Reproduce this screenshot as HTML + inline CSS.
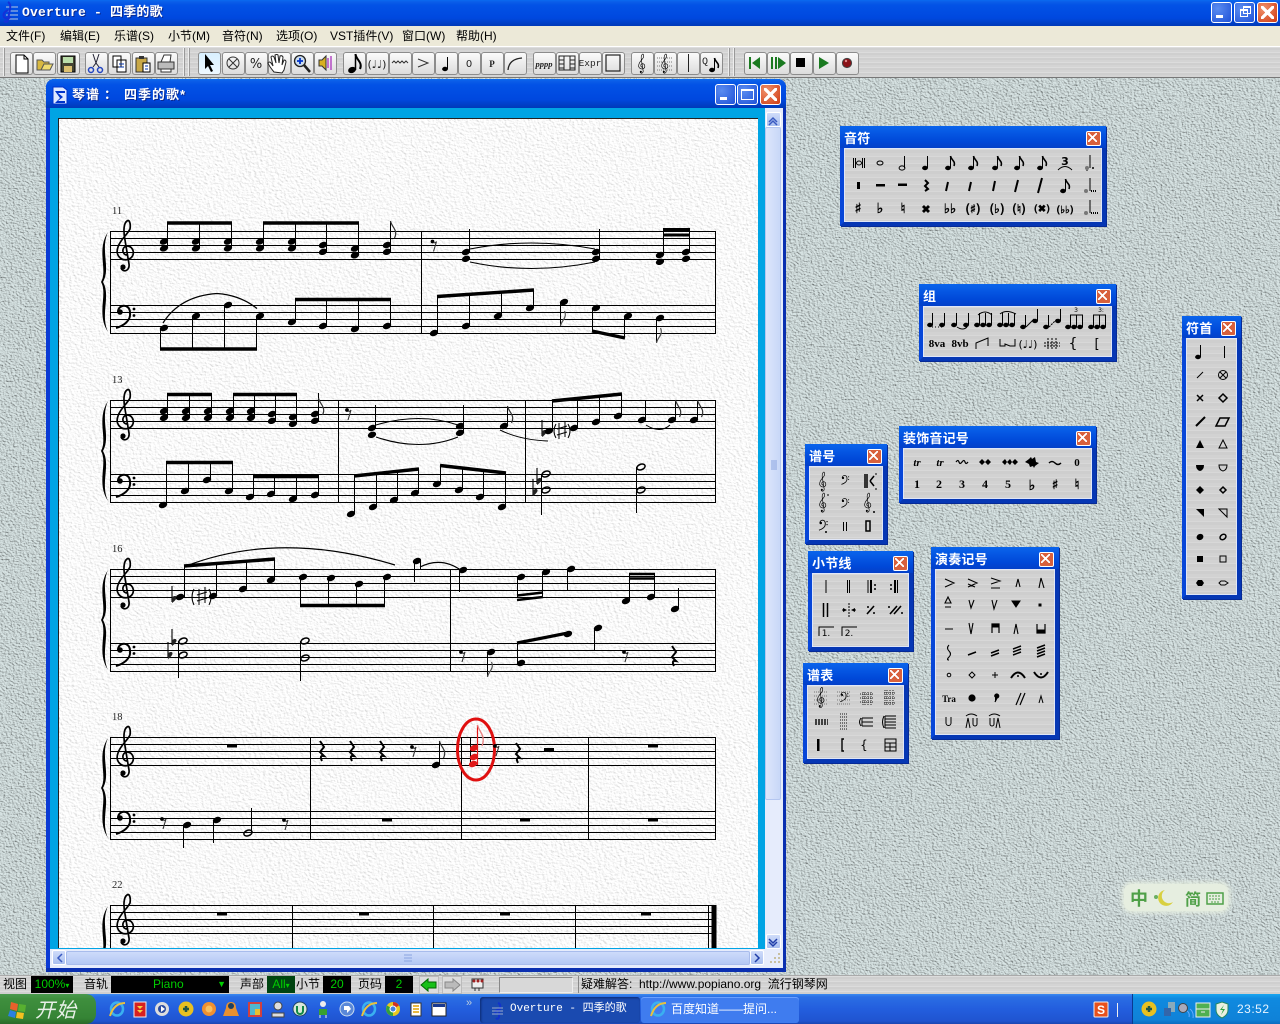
<!DOCTYPE html>
<html lang="zh"><head><meta charset="utf-8"><title>Overture - 四季的歌</title>
<style>
html,body{margin:0;padding:0;width:1280px;height:1024px;overflow:hidden;background:#b9c5c5;font-family:"Liberation Sans","WenQuanYi Zen Hei","Noto Sans CJK SC",sans-serif;font-size:12px;color:#000}
div{position:absolute;box-sizing:border-box}
svg{position:absolute;left:0;top:0}
.tbar{background:linear-gradient(#0a6af0 0,#0a5ce8 8%,#0252e6 20%,#0048df 70%,#0039b8 100%)}
.st{background:repeating-linear-gradient(#dcdcdc 0 1px,#cfcfcf 1px 3px,#d4d4d4 3px 5px)}
.tt{color:#fff;font-weight:bold;white-space:nowrap;text-shadow:1px 1px 0 #0a2a90}
.bt{width:23px;height:23px;top:52px;border:1px solid #8c8c8c;border-radius:3px;background:linear-gradient(#fbfbfb,#dcdcdc)}
.wb{border:1px solid #fff;border-radius:3px;background:radial-gradient(circle at 30% 30%,#5a8cf0,#1f52d8);width:21px;height:21px}
.cl{background:radial-gradient(circle at 30% 30%,#f0926c,#cf3a12)}
.cl:before{content:"";position:absolute;left:3px;top:3px;width:13px;height:13px;background:linear-gradient(45deg,transparent 42%,#fff 42% 58%,transparent 58%),linear-gradient(-45deg,transparent 42%,#fff 42% 58%,transparent 58%)}
.pal{border:4px solid #0746d8;border-bottom-color:#0637b4;border-right-color:#0637b4;background:#0746d8;box-shadow:1px 1px 0 #062a96}
.pal .hd{left:-4px;right:-4px;top:-4px;height:22px;background:linear-gradient(#0a64ec,#0048d8 70%,#0340c8)}
.pal .hd span{position:absolute;left:4px;top:5px;font-size:13px;line-height:15px;color:#fff;font-weight:bold;white-space:nowrap;letter-spacing:.2px}
.pal .x{position:absolute;top:5px;right:5px;width:13px;height:13px;background:#d8603c;border:1px solid #fff;border-radius:2px}
.pal .x:before{content:"";position:absolute;left:1px;top:1px;width:9px;height:9px;background:linear-gradient(45deg,transparent 42%,#fff 42% 58%,transparent 58%),linear-gradient(-45deg,transparent 42%,#fff 42% 58%,transparent 58%)}
.pal .bd{left:0;right:0;top:18px;bottom:0;border:1px solid #dfe6f8;background:repeating-linear-gradient(#d8d8d8 0 1px,#cecece 1px 4px,#d2d2d2 4px 7px)}
.m{top:29px;line-height:14px;font-size:12px;white-space:nowrap}
.lb{top:977px;font-size:12px;line-height:14px;white-space:nowrap}
.bx{top:976px;height:17px;background:#000;color:#0c0;font-size:12px;line-height:17px;text-align:center}
.tk{top:997px;height:26px;border-radius:3px;color:#fff;font-size:12px;line-height:24px;white-space:nowrap}
</style></head><body>

<svg width="1280" height="1024" style="z-index:0">
<defs>
<filter id="tx" x="0" y="0" width="100%" height="100%"><feTurbulence type="fractalNoise" baseFrequency=".42 .55" numOctaves="3" seed="4"/><feDiffuseLighting surfaceScale="1.5" diffuseConstant="1.03" lighting-color="#d8e4e4"><feDistantLight azimuth="135" elevation="60"/></feDiffuseLighting></filter>
</defs>
<rect x="0" y="78" width="1280" height="897" filter="url(#tx)"/>
</svg>

<!-- title bar -->
<div class="tbar" style="left:0;top:0;width:1280px;height:26px;z-index:1"></div>
<div class="tt" style="left:22px;top:4px;font:bold 13px/17px 'Liberation Mono','WenQuanYi Zen Hei','Noto Sans CJK SC',monospace;letter-spacing:.2px;z-index:2">Overture - 四季的歌</div>
<div class="wb" style="left:1211px;top:2px;z-index:2"></div><div style="left:1216px;top:15px;width:7px;height:3px;background:#fff;z-index:3"></div>
<div class="wb" style="left:1234px;top:2px;z-index:2"></div><div style="left:1240px;top:9px;width:8px;height:8px;border:1px solid #fff;border-top-width:2px;z-index:3"></div><div style="left:1243px;top:6px;width:8px;height:8px;border:1px solid #fff;border-top-width:2px;z-index:3"></div>
<div class="wb cl" style="left:1257px;top:2px;z-index:2"></div>
<!-- menu -->
<div style="left:0;top:26px;width:1280px;height:20px;background:#ece9d8;z-index:1"></div>
<div class="m" style="left:6px;z-index:2">文件(F)</div><div class="m" style="left:60px;z-index:2">编辑(E)</div><div class="m" style="left:114px;z-index:2">乐谱(S)</div><div class="m" style="left:168px;z-index:2">小节(M)</div><div class="m" style="left:222px;z-index:2">音符(N)</div><div class="m" style="left:276px;z-index:2">选项(O)</div><div class="m" style="left:330px;z-index:2">VST插件(V)</div><div class="m" style="left:402px;z-index:2">窗口(W)</div><div class="m" style="left:456px;z-index:2">帮助(H)</div>
<!-- toolbar -->
<div class="st" style="left:0;top:46px;width:1280px;height:32px;border-top:1px solid #fff;border-bottom:1px solid #777;z-index:1"></div>
<div style="left:3px;top:48px;width:2px;height:28px;background:#eee;border-right:1px solid #999;z-index:2"></div>
<div style="left:183px;top:48px;width:2px;height:28px;background:#eee;border-right:1px solid #999;z-index:2"></div>
<div style="left:188px;top:48px;width:2px;height:28px;background:#eee;border-right:1px solid #999;z-index:2"></div>
<div style="left:728px;top:48px;width:2px;height:28px;background:#eee;border-right:1px solid #999;z-index:2"></div>
<div style="left:733px;top:48px;width:2px;height:28px;background:#eee;border-right:1px solid #999;z-index:2"></div>
<div style="left:0;top:0;z-index:2">
<div class="bt" style="left:10px"></div><div class="bt" style="left:33px"></div><div class="bt" style="left:57px"></div>
<div class="bt" style="left:85px"></div><div class="bt" style="left:108px"></div><div class="bt" style="left:132px"></div><div class="bt" style="left:155px"></div>
<div class="bt" style="left:198px;background:linear-gradient(#d8f0ff,#eef8ff)"></div><div class="bt" style="left:222px"></div><div class="bt" style="left:245px"></div><div class="bt" style="left:268px"></div><div class="bt" style="left:291px"></div><div class="bt" style="left:314px"></div>
<div class="bt" style="left:343px"></div><div class="bt" style="left:366px"></div><div class="bt" style="left:389px"></div><div class="bt" style="left:412px"></div><div class="bt" style="left:435px"></div><div class="bt" style="left:458px"></div><div class="bt" style="left:481px"></div><div class="bt" style="left:504px"></div>
<div class="bt" style="left:533px"></div><div class="bt" style="left:556px"></div><div class="bt" style="left:579px"></div><div class="bt" style="left:602px"></div>
<div class="bt" style="left:631px"></div><div class="bt" style="left:654px"></div><div class="bt" style="left:677px"></div><div class="bt" style="left:700px"></div>
<div class="bt" style="left:744px"></div><div class="bt" style="left:767px"></div><div class="bt" style="left:790px"></div><div class="bt" style="left:813px"></div><div class="bt" style="left:836px"></div>
</div>

<!-- score window -->
<div style="left:46px;top:79px;width:740px;height:893px;background:#0a3ad4;border-radius:8px 8px 0 0;border-right:3px solid #0a2fb0;border-bottom:4px solid #0a2fb0;z-index:1"></div>
<div class="tbar" style="left:46px;top:79px;width:740px;height:29px;border-radius:8px 8px 0 0;z-index:1"></div>
<div class="tt" style="left:72px;top:87px;font-size:13px;line-height:16px;letter-spacing:1px;z-index:2">琴谱</div>
<div class="tt" style="left:104px;top:87px;font-size:13px;line-height:16px;z-index:2">：</div>
<div class="tt" style="left:124px;top:87px;font-size:13px;line-height:16px;letter-spacing:1px;z-index:2">四季的歌*</div>
<div class="wb" style="left:715px;top:84px;z-index:2"></div><div style="left:720px;top:97px;width:7px;height:3px;background:#fff;z-index:3"></div>
<div class="wb" style="left:737px;top:84px;z-index:2"></div><div style="left:741px;top:89px;width:13px;height:11px;border:1px solid #fff;border-top-width:2px;z-index:3"></div>
<div class="wb cl" style="left:760px;top:84px;z-index:2"></div>
<div style="left:50px;top:108px;width:733px;height:860px;background:#e6ecfc;z-index:1"></div>
<div style="left:50px;top:108px;width:715px;height:841px;background:#00a4e4;z-index:1"></div>
<div style="left:765px;top:127px;width:16px;height:673px;background:linear-gradient(90deg,#dde6fb,#c8d7f8);border:1px solid #b4c6f0;border-radius:2px;z-index:2"></div>
<div style="left:766px;top:112px;width:15px;height:15px;background:linear-gradient(#cfdcfa,#a9bff0);border:1px solid #fff;border-radius:2px;z-index:2"></div>
<div style="left:766px;top:934px;width:15px;height:15px;background:linear-gradient(#cfdcfa,#a9bff0);border:1px solid #fff;border-radius:2px;z-index:2"></div>
<div style="left:52px;top:950px;width:14px;height:15px;background:linear-gradient(#cfdcfa,#a9bff0);border:1px solid #fff;border-radius:2px;z-index:2"></div>
<div style="left:66px;top:951px;width:684px;height:14px;background:linear-gradient(#cddbfa,#b4c8f4);border:1px solid #a8bcec;border-radius:2px;z-index:2"></div>
<div style="left:750px;top:950px;width:14px;height:15px;background:linear-gradient(#cfdcfa,#a9bff0);border:1px solid #fff;border-radius:2px;z-index:2"></div>

<!-- page -->
<svg width="1280" height="1024" style="z-index:2">
<defs>
<filter id="pp" x="0" y="0" width="100%" height="100%"><feTurbulence type="fractalNoise" baseFrequency=".34 .44" numOctaves="3" seed="9"/><feDiffuseLighting surfaceScale=".65" diffuseConstant="1.12" lighting-color="#fff"><feDistantLight azimuth="135" elevation="60"/></feDiffuseLighting></filter>
<clipPath id="pg"><rect x="58" y="118" width="700" height="830"/></clipPath>
<g id="n"><ellipse rx="4.3" ry="3" transform="rotate(-22)"/></g>
<g id="c"><use href="#n"/><use href="#n" y="6.8"/></g>
<path id="rq" d="M-2-10 L2-4 L-2 1 L2 5 Q-3 4 0 10" fill="none" stroke="#000" stroke-width="2"/>
<g id="re"><circle r="1.9"/><path d="M1 1 Q3 2 4 0 L1 10" fill="none" stroke="#333" stroke-width="1.1"/></g>
<rect id="rw" x="-5" y="0" width="10" height="3.5"/>
<path id="fl" d="M0 0 C1 6 8 9 4 17" fill="none" stroke="#333" stroke-width="1.2"/>
<path id="fd" d="M0 0 C1 -6 7 -8 4 -15" fill="none" stroke="#555" stroke-width="1.2"/>
<path id="sl" d="M110 231.5H716M110 238.5H716M110 245.5H716M110 252.5H716M110 259.5H716M110 305.5H716M110 312.5H716M110 319.5H716M110 326.5H716M110 333.5H716M110.5 231V334M715.5 231V334" stroke="#000" fill="none"/>
<path id="br" d="M108 232 C96 250 108 270 101 282 C108 294 96 314 108 332 C100 314 111 296 103 282 C111 268 100 250 108 232Z" fill="#000"/>
<g id="tc" fill="none" stroke="#000"><path d="M1 3 C-4 3 -5 -5 1 -6 C8 -6 10 4 3 7 C-5 10 -11 3 -8 -5 C-6 -12 1 -17 4 -23 C5 -29 3 -33 1 -31 C-2 -29 -3 -22 -1 -12 L3 12 C4 19 -3 21 -5 16" stroke-width="1.7"/><circle cx="-3" cy="15" r="2.6" fill="#000" stroke="none"/></g>
<g id="bc"><circle cx="-5" cy="0" r="2.8"/><path d="M-7 0 C-7 -8 5 -9 5 1 C6 9 -2 14 -9 16" fill="none" stroke="#000" stroke-width="2"/><circle cx="9" cy="-3" r="1.4"/><circle cx="9" cy="3.5" r="1.4"/></g>
<g id="fb"><path d="M0-11V5" stroke="#000" stroke-width="1.1" fill="none"/><path d="M0 0 C5-3 7 1 0 6Z" fill="#222"/></g>
<g id="nt"><path d="M-3-8V8M3-10V6M-5-2L5-5M-5 4L5 1" stroke="#000" fill="none"/></g>
</defs>
<rect x="58" y="118" width="700" height="830" filter="url(#pp)"/>
<path d="M58.5 119V948M58 118.5H758" stroke="#222"/>
<g clip-path="url(#pg)">
<use href="#sl"/><use href="#sl" y="169"/><use href="#sl" y="338"/><use href="#sl" y="506"/><use href="#sl" y="674"/>
<use href="#br"/><use href="#br" y="169"/><use href="#br" y="338"/><use href="#br" y="506"/><use href="#br" y="674"/>
<use href="#tc" x="126" y="252"/><use href="#tc" x="126" y="421"/><use href="#tc" x="126" y="590"/><use href="#tc" x="126" y="758"/><use href="#tc" x="126" y="926"/>
<use href="#bc" x="125" y="312"/><use href="#bc" x="125" y="481"/><use href="#bc" x="125" y="650"/><use href="#bc" x="125" y="818"/>
<g font-family="Liberation Serif,serif" font-size="10.5" fill="#222"><text x="112" y="214">11</text><text x="112" y="383">13</text><text x="112" y="552">16</text><text x="112" y="720">18</text><text x="112" y="888">22</text></g>

<!-- barlines -->
<path d="M421.5 231V334M338.5 400V503M525.5 400V503M450.5 569V672M310.5 737V840M461.5 737V840M588.5 737V840M292.5 905V950M433.5 905V950M575.5 905V950M708.5 905V950" stroke="#000"/>
<rect x="711.5" y="905" width="5" height="45"/>

<!-- system 1 -->
<use href="#c" x="164" y="241.5"/><use href="#c" x="196" y="241.5"/><use href="#c" x="228" y="241.5"/><use href="#c" x="260" y="241.5"/><use href="#c" x="292" y="241.5"/><use href="#c" x="323" y="245"/><use href="#c" x="355" y="248.5"/><use href="#c" x="387" y="245"/><use href="#n" x="355" y="255"/>
<path d="M167.5 222V248M199.5 222V248M231.5 222V248M263.5 222V248M295.5 222V248M326.5 222V251M358.5 222V255M390.5 221V251" stroke="#000" fill="none"/>
<path d="M167 223H232M263 223H359" stroke="#000" stroke-width="3.5"/><use href="#fl" x="390.5" y="221"/>
<use href="#n" x="164" y="328"/><use href="#n" x="196" y="316"/><use href="#n" x="228" y="305"/><use href="#n" x="260" y="316"/><use href="#n" x="292" y="322"/><use href="#n" x="323" y="326"/><use href="#n" x="355" y="329"/><use href="#n" x="387" y="326"/>
<path d="M160.5 328V349M192.5 316V349M224.5 305V349M256.5 316V349M295.5 322V300M326.5 326V300M358.5 329V300M390.5 326V300" stroke="#000" fill="none"/>
<path d="M160 349H257M295 299.5H391" stroke="#000" stroke-width="3.5"/>
<path d="M163 323 Q180 296 217 293.5 Q240 295 257 308.5" stroke="#000" stroke-width="1.2" fill="none"/>
<use href="#re" x="432.5" y="241.5"/>
<use href="#c" x="466" y="252"/><use href="#c" x="596" y="252"/><use href="#c" x="660" y="255"/><use href="#c" x="686" y="252"/>
<path d="M469.5 229V252M599.5 229V258M663.5 229V255M689.5 229V252" stroke="#000" fill="none"/>
<path d="M663 229.5H690M663 235H690" stroke="#000" stroke-width="3"/>
<path d="M470 249 Q530 237 595 249M470 262 Q530 275 595 262" stroke="#000" fill="none" stroke-width="1.1"/>
<use href="#n" x="434" y="333"/><use href="#n" x="466" y="326"/><use href="#n" x="498" y="316"/><use href="#n" x="530" y="308"/><use href="#n" x="564" y="302"/><use href="#n" x="596" y="308"/><use href="#n" x="628" y="316"/><use href="#n" x="660" y="318"/>
<path d="M437.5 333V297M469.5 326V294M501.5 316V292M533.5 308V290M560.5 302V326M592.5 308V331M624.5 316V338M656.5 318V343" stroke="#000" fill="none"/>
<path d="M437 296.5L534 290M592 331L625 338" stroke="#000" stroke-width="3.4"/><use href="#fd" x="560.5" y="326"/><use href="#fd" x="656.5" y="343"/>

<!-- system 2 -->
<use href="#c" x="164" y="411"/><use href="#c" x="186" y="411"/><use href="#c" x="208" y="411"/><use href="#c" x="230" y="411"/><use href="#c" x="251" y="411"/><use href="#c" x="272" y="414"/><use href="#c" x="293" y="417"/><use href="#c" x="315" y="414"/>
<path d="M167.5 393V418M189.5 393V418M211.5 393V418M233.5 393V418M254.5 393V418M275.5 393V421M296.5 393V424M318.5 393V421" stroke="#000" fill="none"/>
<path d="M167 394.5H212M233 394.5H297" stroke="#000" stroke-width="3.5"/><use href="#fl" x="318.5" y="398"/>
<use href="#n" x="163" y="505"/><use href="#n" x="185" y="491"/><use href="#n" x="207" y="480"/><use href="#n" x="229" y="491"/><use href="#n" x="250" y="497"/><use href="#n" x="271" y="494"/><use href="#n" x="293" y="499"/><use href="#n" x="315" y="495"/>
<path d="M166.5 505V462M188.5 491V462M210.5 480V462M232.5 491V462M253.5 497V476M274.5 494V476M296.5 499V476M318.5 495V476" stroke="#000" fill="none"/>
<path d="M166 462.5H233M253 476.5H319" stroke="#000" stroke-width="3.5"/>
<use href="#re" x="347" y="410"/>
<use href="#c" x="372" y="428"/><use href="#c" x="460" y="426"/>
<path d="M375.5 405V428M463.5 405V432" stroke="#000" fill="none"/>
<path d="M376 425 Q420 412 458 425M376 437 Q420 452 458 437" stroke="#000" fill="none" stroke-width="1.1"/>
<use href="#n" x="504" y="426"/><path d="M507.5 426V406" stroke="#000" fill="none"/><use href="#fl" x="507.5" y="406"/>
<use href="#n" x="351" y="514"/><use href="#n" x="373" y="507"/><use href="#n" x="394" y="500"/><use href="#n" x="415" y="493"/><use href="#n" x="437" y="484"/><use href="#n" x="459" y="490"/><use href="#n" x="480" y="497"/><use href="#n" x="502" y="507"/>
<path d="M354.5 514V476M376.5 507V473M397.5 500V471M418.5 493V468M440.5 484V465M462.5 490V467M483.5 497V470M505.5 507V473" stroke="#000" fill="none"/>
<path d="M354 476L419 469M440 465.5L506 473" stroke="#000" stroke-width="3.4"/>
<use href="#fb" x="542" y="431"/><use href="#n" x="549" y="431"/><use href="#nt" x="562" y="431"/><path d="M556 424Q552 431 556 438M568 424Q572 431 568 438" stroke="#000" fill="none"/>
<use href="#n" x="574" y="428"/><use href="#n" x="596" y="422"/><use href="#n" x="618" y="416"/><use href="#n" x="642" y="420"/><use href="#n" x="672" y="420"/><use href="#n" x="694" y="420"/>
<path d="M552.5 431V400M577.5 428V398M599.5 422V396M621.5 416V394M645.5 420V400M675.5 420V400M697.5 420V400" stroke="#000" fill="none"/>
<path d="M552 401L622 394" stroke="#000" stroke-width="3.4"/><use href="#fl" x="675.5" y="400"/><use href="#fl" x="697.5" y="400"/>
<path d="M500 430 Q520 440 548 441M646 425 Q660 434 670 425" stroke="#000" fill="none"/>
<use href="#fb" x="533" y="490"/><use href="#fb" x="537" y="479"/>
<g fill="none" stroke="#000" stroke-width="1.5"><ellipse cx="546" cy="474" rx="4.3" ry="2.7" transform="rotate(-22 546 474)"/><ellipse cx="546" cy="490" rx="4.3" ry="2.7" transform="rotate(-22 546 490)"/><ellipse cx="641" cy="467" rx="4.3" ry="2.7" transform="rotate(-22 641 467)"/><ellipse cx="641" cy="490" rx="4.3" ry="2.7" transform="rotate(-22 641 490)"/></g>
<path d="M541.5 474V515M636.5 467V513" stroke="#000" fill="none"/>

<!-- system 3 -->
<use href="#fb" x="172" y="597"/><use href="#n" x="180" y="597"/><use href="#nt" x="202" y="597"/><path d="M194 589Q190 597 194 605M209 589Q213 597 209 605" stroke="#000" fill="none"/>
<use href="#n" x="213" y="596"/><use href="#n" x="243" y="589"/><use href="#n" x="271" y="580"/>
<path d="M184.5 597V566M216.5 596V563M246.5 589V561M274.5 580V559" stroke="#000" fill="none"/>
<path d="M184 566L275 559" stroke="#000" stroke-width="3.4"/>
<path d="M186 566 Q280 530 395 565" stroke="#000" stroke-width="1.2" fill="none"/>
<use href="#n" x="303" y="577"/><use href="#n" x="331" y="578"/><use href="#n" x="359" y="584"/><use href="#n" x="387" y="577"/>
<path d="M300.5 577V606M328.5 578V606M356.5 584V606M384.5 577V606" stroke="#000" fill="none"/>
<path d="M300 605.5H385" stroke="#000" stroke-width="3.5"/>
<use href="#n" x="417" y="561"/><path d="M420.5 561V570M414.5 561V582" stroke="#000" fill="none"/><path d="M420 567 Q442 556 462 571" stroke="#000" fill="none" stroke-width="1.2"/>
<use href="#n" x="463" y="570"/><path d="M459.5 570V592" stroke="#000" fill="none"/>
<use href="#n" x="521" y="577"/><use href="#n" x="546" y="572"/><path d="M517.5 577V598M542.5 572V596" stroke="#000" fill="none"/><path d="M517 600L543 597M517 595.5L543 592.5" stroke="#000" stroke-width="2.4"/>
<use href="#n" x="571" y="569"/><path d="M567.5 569V591" stroke="#000" fill="none"/>
<use href="#n" x="626" y="601"/><use href="#n" x="651" y="597"/><path d="M629.5 601V574M654.5 597V573" stroke="#000" fill="none"/><path d="M629 574H655M629 578.5H655" stroke="#000" stroke-width="2.4"/>
<use href="#n" x="675" y="609"/><path d="M678.5 609V588" stroke="#000" fill="none"/>
<use href="#fb" x="168" y="653"/><use href="#fb" x="172" y="640"/>
<g fill="none" stroke="#000" stroke-width="1.5"><ellipse cx="183" cy="641" rx="4.3" ry="2.7" transform="rotate(-22 183 641)"/><ellipse cx="183" cy="655" rx="4.3" ry="2.7" transform="rotate(-22 183 655)"/><ellipse cx="305" cy="641" rx="4.3" ry="2.7" transform="rotate(-22 305 641)"/><ellipse cx="305" cy="658" rx="4.3" ry="2.7" transform="rotate(-22 305 658)"/></g>
<path d="M178.5 641V678M300.5 641V681" stroke="#000" fill="none"/>
<use href="#re" x="461" y="652"/><use href="#n" x="491" y="652"/><path d="M487.5 652V677" stroke="#000" fill="none"/><use href="#fd" x="487.5" y="677"/>
<use href="#n" x="521" y="663"/><use href="#n" x="568" y="634"/><path d="M517.5 663V643M564.5 634V633" stroke="#000" fill="none"/><path d="M517 643L568 633" stroke="#000" stroke-width="3.2"/>
<use href="#n" x="598" y="628"/><path d="M594.5 628V651" stroke="#000" fill="none"/>
<use href="#re" x="624" y="652"/><use href="#rq" x="674" y="656"/>

<!-- system 4 -->
<use href="#rw" x="232" y="744"/><use href="#rw" x="653" y="744"/><use href="#rw" x="549" y="748"/>
<use href="#rq" x="322" y="751"/><use href="#rq" x="352" y="751"/><use href="#rq" x="382" y="751"/><use href="#re" x="412" y="747"/>
<use href="#n" x="436" y="765"/><path d="M439.5 765V741" stroke="#000" fill="none"/><use href="#fl" x="439.5" y="741"/>
<path d="M470.5 737V765" stroke="#000"/>
<g fill="#e01818"><use href="#n" x="474" y="748"/><use href="#n" x="474" y="757"/><use href="#n" x="473" y="764"/></g>
<path d="M477.5 765V725" stroke="#e01818" stroke-width="1.2"/>
<path d="M477.5 725 C479 732 486 735 482 746" stroke="#e88080" stroke-width="1.3" fill="none"/>
<ellipse cx="476" cy="749.5" rx="18.5" ry="30.5" fill="none" stroke="#e01010" stroke-width="3"/>
<use href="#re" x="495" y="746"/><use href="#rq" x="518" y="753"/>
<use href="#re" x="162" y="819"/><use href="#n" x="187" y="825"/><use href="#n" x="217" y="820"/><path d="M183.5 825V848M213.5 820V843" stroke="#000" fill="none"/>
<ellipse cx="248" cy="833" rx="4.3" ry="2.7" transform="rotate(-22 248 833)" fill="none" stroke="#000" stroke-width="1.5"/><path d="M251.5 833V808" stroke="#000" fill="none"/>
<use href="#re" x="284" y="820"/><use href="#rw" x="387" y="818"/><use href="#rw" x="525" y="818"/><use href="#rw" x="653" y="818"/>

<!-- system 5 -->
<use href="#rw" x="222" y="912"/><use href="#rw" x="364" y="912"/><use href="#rw" x="505" y="912"/><use href="#rw" x="646" y="912"/>
</g>

<!-- window + scroll icons -->
<g>
<path d="M53 87h10l4 3v14H53z" fill="#dfe8ff" stroke="#03c" stroke-width="1"/><path d="M55 91h10v2h-7l5 4-5 4h7v2H55l5-5z" fill="#03c"/>
<path d="M769 122l4-4 4 4M769 125l4-4 4 4" stroke="#3a5ac0" fill="none" stroke-width="1.5"/>
<path d="M769 939l4 4 4-4M769 942l4 4 4-4" stroke="#203ea8" fill="none" stroke-width="1.5"/>
<path d="M62 954l-4 4 4 4" stroke="#3a5ac0" fill="none" stroke-width="1.5"/><path d="M755 954l4 4-4 4" stroke="#203ea8" fill="none" stroke-width="1.5"/>
<path d="M772 460v10M774 460v10M776 460v10M404 955h8M404 958h8M404 961h8" stroke="#8aa4e0"/>
<path d="M770 962h2M774 962h2M778 962h2M774 958h2M778 958h2M778 954h2" stroke="#c8c0a0" stroke-width="2"/>
</g>
</svg>

<!-- palettes -->
<div class="pal" style="left:840px;top:126px;width:266px;height:100px;z-index:3"><div class="hd"><span>音符</span><i class="x"></i></div><div class="bd"></div></div>
<div class="pal" style="left:919px;top:284px;width:197px;height:77px;z-index:3"><div class="hd"><span>组</span><i class="x"></i></div><div class="bd"></div></div>
<div class="pal" style="left:805px;top:444px;width:82px;height:100px;z-index:3"><div class="hd"><span>谱号</span><i class="x"></i></div><div class="bd"></div></div>
<div class="pal" style="left:899px;top:426px;width:197px;height:77px;z-index:3"><div class="hd"><span>装饰音记号</span><i class="x"></i></div><div class="bd"></div></div>
<div class="pal" style="left:808px;top:551px;width:105px;height:100px;z-index:3"><div class="hd"><span>小节线</span><i class="x"></i></div><div class="bd"></div></div>
<div class="pal" style="left:803px;top:663px;width:105px;height:100px;z-index:3"><div class="hd"><span>谱表</span><i class="x"></i></div><div class="bd"></div></div>
<div class="pal" style="left:931px;top:547px;width:128px;height:192px;z-index:3"><div class="hd"><span>演奏记号</span><i class="x"></i></div><div class="bd"></div></div>
<div class="pal" style="left:1182px;top:316px;width:59px;height:283px;z-index:3"><div class="hd"><span>符首</span><i class="x"></i></div><div class="bd"></div></div>

<!-- IME bar -->
<div style="left:1124px;top:884px;width:104px;height:27px;border-radius:8px;background:#e6eee0;box-shadow:0 0 5px 2px #e6eee0;z-index:3"></div>
<div style="left:1130px;top:887px;color:#4fa048;font:bold 18px/22px 'Noto Sans CJK SC',sans-serif;z-index:4">中</div>
<div style="left:1185px;top:887px;color:#4fa048;font:bold 16px/22px 'Noto Sans CJK SC',sans-serif;z-index:4">简</div>

<svg width="1280" height="1024" style="z-index:4">
<defs>
<g id="q"><ellipse cx="-2" cy="5" rx="2.9" ry="2.2"/><path d="M.5 5V-7" stroke="#000"/></g>
<g id="h"><ellipse cx="-2" cy="5" rx="2.9" ry="2.1" fill="none" stroke="#000"/><path d="M.5 5V-7" stroke="#000"/></g>
<g id="e"><use href="#q"/><path d="M.5-7C1-3 6-2 4 3" stroke="#000" fill="none" stroke-width="1.6"/></g>
</defs>
<!-- IME glyphs -->
<path d="M1165 890a8 8 0 1 0 8 12a7 7 0 0 1-8-12z" fill="#d8d040"/><circle cx="1156" cy="897" r="2" fill="#6ab060"/>
<rect x="1207" y="893" width="16" height="11" fill="none" stroke="#4fa048" stroke-width="1.5"/><path d="M1209 896h12M1209 899h12M1211 902h8" stroke="#4fa048" stroke-dasharray="2 1"/>
<g font-family="DejaVu Sans,Liberation Sans,sans-serif" font-size="13" text-anchor="middle" fill="#000">
<!-- 音符 -->
<path d="M853.5 158V168M855.5 158V168M862.5 158V168M864.5 158V168" stroke="#000"/><ellipse cx="859" cy="163" rx="2.5" ry="2" fill="none" stroke="#000"/>
<ellipse cx="880" cy="163" rx="3" ry="2" fill="none" stroke="#000"/>
<use href="#h" x="904" y="163"/><use href="#q" x="927" y="163"/><use href="#e" x="950" y="163"/><use href="#e" x="973" y="163"/><use href="#e" x="997" y="163"/><use href="#e" x="1019" y="163"/><use href="#e" x="1042" y="163"/>
<text x="1065" y="165" font-size="11" font-weight="bold">3</text><path d="M1058 170Q1065 163 1072 170" stroke="#000" fill="none"/>
<path d="M1090 155V168M1087 168v3" stroke="#000"/><circle cx="1087" cy="168" r="2" fill="#777"/><circle cx="1093" cy="168" r="1"/>
<rect x="857" y="182" width="3" height="7"/><rect x="876" y="184" width="9" height="2.5"/><rect x="898" y="183.5" width="9" height="2.5"/>
<path d="M925 180l3 3-3 3 3 3-3 2M948 182l-2 9M971 182l-2 9M995 181l-2 10M1018 180l-3 12M1042 178l-4 15" stroke="#000" stroke-width="2" fill="none"/>
<use href="#e" x="1065" y="186"/>
<path d="M1090 178V191M1086 191v1" stroke="#000"/><circle cx="1086" cy="191" r="2" fill="#777"/><path d="M1091 191h5" stroke="#000" stroke-dasharray="1 1" stroke-width="2"/>
<g stroke="#000" stroke-width=".5"><text x="858" y="213" font-size="14">♯</text><text x="880" y="213" font-size="14">♭</text><text x="903" y="213" font-size="14">♮</text><text x="926" y="213" font-size="11">✖</text><text x="950" y="213" font-size="13">♭♭</text>
<text x="973" y="213" font-size="12">(♯)</text><text x="997" y="213" font-size="12">(♭)</text><text x="1019" y="213" font-size="12">(♮)</text><text x="1042" y="212" font-size="10">(✖)</text><text x="1065" y="213" font-size="10">(♭♭)</text></g>
<path d="M1090 200V213" stroke="#000"/><circle cx="1086" cy="213" r="2" fill="#777"/><path d="M1091 213h8" stroke="#000" stroke-dasharray="1 1" stroke-width="2"/>
<!-- 组 -->
<use href="#q" x="932" y="320"/><use href="#q" x="944" y="320"/><path d="M932 327h10" stroke="#000" stroke-dasharray="1 2"/>
<use href="#q" x="956" y="320"/><use href="#q" x="968" y="320"/><path d="M957 327Q963 331 967 327" stroke="#000" fill="none"/>
<use href="#q" x="979" y="320"/><use href="#q" x="985" y="320"/><use href="#q" x="991" y="320"/><path d="M978 315Q985 309 992 315" stroke="#000" fill="none"/>
<use href="#q" x="1002" y="320"/><use href="#q" x="1008" y="320"/><use href="#q" x="1014" y="320"/><path d="M1000 314Q1006 309 1016 314" stroke="#000" fill="none"/>
<use href="#q" x="1025" y="322"/><use href="#q" x="1037" y="316"/><path d="M1026 327L1034 319" stroke="#000"/>
<use href="#q" x="1048" y="322"/><use href="#q" x="1060" y="316"/><path d="M1049 327L1057 319" stroke="#000" stroke-dasharray="2 1"/>
<use href="#q" x="1070" y="322"/><use href="#q" x="1076" y="322"/><use href="#q" x="1082" y="322"/><path d="M1070 315H1083" stroke="#000"/><text x="1076" y="312" font-size="6">3</text>
<use href="#q" x="1093" y="322"/><use href="#q" x="1099" y="322"/><use href="#q" x="1105" y="322"/><path d="M1093 315H1106" stroke="#000"/><text x="1101" y="312" font-size="6">3:</text>
<text x="937" y="347" font-size="11" font-weight="bold" font-family="Liberation Serif,serif">8va</text><text x="960" y="347" font-size="11" font-weight="bold" font-family="Liberation Serif,serif">8vb</text>
<path d="M976 349V343L988 338V346M1000 339V346H1005V344L1010 346H1015V339" stroke="#000" fill="none"/>
<text x="1028" y="348" font-size="11">(♩♩)</text>
<path d="M1044 343H1060M1048 338V349M1052 338V349M1056 338V349M1044 346H1060" stroke="#000" stroke-dasharray="2 1"/>
<text x="1073" y="348" font-size="14">{</text><text x="1097" y="348" font-size="13">[</text>
<!-- 谱号 -->
<g transform="translate(823 484) scale(.38)"><use href="#tc"/></g><g transform="translate(845 478) scale(.4)"><use href="#bc"/></g>
<path d="M865 474V488M867 474V488" stroke="#000" stroke-width="1.5"/><path d="M870 481l4-5M870 481l4 5" stroke="#000" stroke-width="1.5"/><path d="M876 473v2M876 488v2" stroke="#000"/>
<g transform="translate(823 505) scale(.38)"><use href="#tc"/></g><path d="M827 495h2" stroke="#000"/>
<g transform="translate(845 501) scale(.4)"><use href="#bc"/></g>
<g transform="translate(868 505) scale(.38)"><use href="#tc"/></g><circle cx="874" cy="512" r="1"/>
<g transform="translate(823 523) scale(.45)"><use href="#bc"/></g><circle cx="826" cy="532" r="1"/>
<path d="M843.5 522V531M846.5 522V531" stroke="#000"/><rect x="866" y="521" width="4" height="10" fill="none" stroke="#000" stroke-width="1.5"/>
<!-- 装饰音 -->
<text x="917" y="466" font-size="11" font-style="italic" font-weight="bold" font-family="Liberation Serif,serif">tr</text><text x="940" y="466" font-size="11" font-style="italic" font-weight="bold" font-family="Liberation Serif,serif">tr</text>
<path d="M956 462q2-3 3 0t3 0 3 0 3 0" stroke="#000" fill="none" stroke-width="1.2"/>
<path d="M979 462l3-3 3 3 3-3 3 3-3 3-3-3-3 3z"/><path d="M1002 462l3-3 2 3 3-3 2 3 3-3 3 3-3 3-3-3-2 3-3-3-2 3z"/>
<path d="M1025 462l4-3 2-2 1 2 3-2 1 5 3 1-4 3-1 2-1-2-3 1-1-3z"/>
<path d="M1049 463q3-3 6 0t6 0" stroke="#000" fill="none" stroke-width="1.5"/>
<text x="1077" y="466" font-size="11" font-weight="bold" font-family="Liberation Serif,serif">0</text>
<g font-size="12" font-weight="bold" font-family="Liberation Serif,serif"><text x="917" y="488">1</text><text x="939" y="488">2</text><text x="962" y="488">3</text><text x="985" y="488">4</text><text x="1008" y="488">5</text></g>
<g stroke="#000" stroke-width=".5"><text x="1032" y="490" font-size="14">♭</text><text x="1055" y="489" font-size="13">♯</text><text x="1077" y="489" font-size="14">♮</text></g>
<!-- 小节线 -->
<path d="M826 580V593M847.5 580V593M849.5 580V593M868 580V593" stroke="#000" fill="none"/><rect x="870" y="580" width="2" height="13"/><circle cx="875" cy="585" r="1"/><circle cx="875" cy="589" r="1"/>
<rect x="894" y="580" width="2" height="13"/><path d="M897.5 580V593" stroke="#000"/><circle cx="891" cy="585" r="1"/><circle cx="891" cy="589" r="1"/>
<path d="M823.5 603V617M827.5 603V617" stroke="#000" stroke-width="1.5"/>
<path d="M849 603V617" stroke="#000" stroke-dasharray="2 1"/><path d="M847 610l-4-2v4zM851 610l4-2v4z"/><path d="M842 610h2M854 610h2" stroke="#000"/>
<path d="M867 614l7-8M890 614l7-8M894 614l7-8" stroke="#000" stroke-width="1.6"/><circle cx="868" cy="607" r="1"/><circle cx="874" cy="613" r="1"/><circle cx="889" cy="607" r="1"/><circle cx="902" cy="613" r="1"/>
<path d="M819 636V627H834M842 636V627H857" stroke="#000" fill="none"/><text x="826" y="636" font-size="9">1.</text><text x="849" y="636" font-size="9">2.</text>
<!-- 谱表 -->
<g transform="translate(821 700) scale(.4)"><use href="#tc"/></g><path d="M814 692h14M814 696h14M814 700h14M814 704h14" stroke="#777" stroke-dasharray="1 1"/>
<g transform="translate(844 695) scale(.42)"><use href="#bc"/></g><path d="M837 692h14M837 696h14M837 700h14M837 704h14" stroke="#777" stroke-dasharray="1 1"/>
<path d="M863 692V705M865 692V705M868 692V705M871 692V705M860 694h14M860 698h14M860 702h14" stroke="#222" stroke-dasharray="1 1"/>
<path d="M885 690V706M887 690V706M890 690V706M893 690V706M884 693h12M884 698h12M884 703h12" stroke="#222" stroke-dasharray="1 1"/>
<path d="M815 720h13M815 722h13M815 724h13" stroke="#111" stroke-width="1.4" stroke-dasharray="2 1"/>
<path d="M840 714h7M840 717h7M840 720h7M840 723h7M840 726h7M840 729h7" stroke="#111" stroke-dasharray="1 1"/>
<path d="M862 718h11M862 722h11M862 726h11M862 718V726" stroke="#000" fill="none"/><path d="M861 718q-3 4 0 8" stroke="#000" fill="none"/>
<path d="M885 716h11M885 719h11M885 722h11M885 725h11M885 728h11M885 716V728" stroke="#000" fill="none"/><path d="M884 716q-3 6 0 12" stroke="#000" fill="none"/>
<rect x="817" y="739" width="2.5" height="12"/><path d="M844 739h-2v12h2" stroke="#000" stroke-width="1.4" fill="none"/><text x="864" y="749" font-size="12">{</text>
<path d="M885 739h11v12h-11zM885 743h11M885 747h11M890 743v8" stroke="#000" fill="none"/>
<!-- 演奏 -->
<g stroke="#000" fill="none">
<path d="M945 579l9 4-9 4M968 579l9 4-9 4M968 584l7 3M991 578l9 3-9 3M991 588h9M1016 587l2-8 2 8M1039 588l2-10 3 10" stroke-width="1.1"/>
<path d="M945 603l3-6 3 6zM945 607h6M969 600l2 8 3-8M992 600l2 9 3-9" stroke-width="1.1"/>
<path d="M1012 601h8l-4 6z" fill="#000"/><rect x="1039" y="604" width="2" height="2" fill="#000"/>
<path d="M945 629h8M969 623l2 11 2-11M1014 634l2-10 2 10" stroke-width="1.1"/>
<path d="M992 633v-9h7v9" stroke-width="1.2"/><rect x="992" y="624" width="7" height="3" fill="#000"/>
<path d="M1037 624v9h8v-9" stroke-width="1.2"/><rect x="1037" y="630" width="8" height="3" fill="#000"/>
<path d="M949 645q-3 3 0 6t0 6 0 3" stroke-width="1.1"/>
<path d="M968 655l8-3" stroke-width="1.6"/><path d="M991 656l8-3M991 653l8-3" stroke-width="1.5"/><path d="M1013 655l8-3M1013 652l8-3M1013 649l8-3" stroke-width="1.5"/><path d="M1037 657l8-3M1037 654l8-3M1037 651l8-3M1037 648l8-3" stroke-width="1.5"/>
<circle cx="949" cy="675" r="1.8"/><path d="M972 672l3 3-3 3-3-3zM992 675h6M995 672v6"/>
<path d="M1011 678q7-11 14 0" stroke-width="2"/><path d="M1034 672q7 11 14 0" stroke-width="2"/>
<path d="M1016 705l5-12M1020 705l5-12" stroke-width="1.2"/><path d="M1039 703l2-7 2 7" stroke-width="1"/>
<path d="M946 717v6a2.5 2.5 0 0 0 5 0v-6M966 728l2-10 2 10M973 718v6a2 2 0 0 0 4 0v-6M966 716q5-4 11 0M990 718v6a2 2 0 0 0 4 0v-6M996 728l2-10 2 10M989 716q5-4 11 0"/>
</g>
<text x="949" y="702" font-size="9" font-family="Liberation Serif,serif" font-weight="bold">Tra</text><circle cx="972" cy="698" r="3.6"/><path d="M995 697a2 2 0 1 1 2 1l-2 4" stroke="#000" stroke-width="1.2"/>
<circle cx="1018" cy="676" r="1"/><circle cx="1041" cy="674" r="1"/>
<!-- 符首 -->
<use href="#q" x="1200" y="352"/><path d="M1224.5 346V358" stroke="#000"/>
<path d="M1197 378l6-6" stroke="#000"/><circle cx="1223" cy="375" r="4.5" fill="none" stroke="#000"/><path d="M1220 372l6 6M1226 372l-6 6" stroke="#000"/>
<path d="M1197 395l6 6M1203 395l-6 6" stroke="#000" stroke-width="1.5"/><path d="M1223 394l4 4-4 4-4-4z" fill="none" stroke="#000" stroke-width="1.5"/>
<path d="M1196 426l9-9" stroke="#000" stroke-width="2"/><path d="M1216 426l4-8h9l-4 8z" fill="none" stroke="#000" stroke-width="1.5"/>
<path d="M1200 440l4 8h-8z"/><path d="M1223 440l4 8h-8z" fill="none" stroke="#000"/>
<path d="M1196 465h8q0 5-4 6q-4-1-4-6z"/><path d="M1219 465h8q0 5-4 6q-4-1-4-6z" fill="none" stroke="#000"/>
<path d="M1200 486l4 4-4 4-4-4z"/><path d="M1223 487l3 3-3 3-3-3z" fill="none" stroke="#000" stroke-width="1.5"/>
<path d="M1196 509h8v8z"/><path d="M1219 509h8v8z" fill="none" stroke="#000"/>
<ellipse cx="1200" cy="537" rx="3.5" ry="3" transform="rotate(-25 1200 537)"/><ellipse cx="1223" cy="537" rx="3.2" ry="2.4" transform="rotate(-35 1223 537)" fill="none" stroke="#000" stroke-width="1.5"/>
<rect x="1197" y="556" width="6" height="6"/><rect x="1220" y="556" width="6" height="6" fill="none" stroke="#000"/>
<path d="M1196 583l2-3h4l2 3-2 3h-4z"/><path d="M1219 583l2-2h4l3 2-3 2h-4z" fill="none" stroke="#000"/>
</g>

<!-- toolbar icons -->
<g font-family="DejaVu Sans,Liberation Sans,sans-serif" text-anchor="middle">
<path d="M16 55h8l4 4v14H16z" fill="#fff" stroke="#000"/><path d="M24 55v4h4" fill="none" stroke="#000"/>
<path d="M37 70V60h5l2 2h5v8z" fill="#d8b840" stroke="#555"/><path d="M41 70l3-6h9l-3 6z" fill="#f0dc70" stroke="#555"/>
<path d="M61 56h14v16H61z" fill="#443" stroke="#000"/><rect x="63" y="57" width="10" height="6" fill="#bda"/><rect x="64" y="66" width="8" height="6" fill="#dcc070"/>
<path d="M93 54l3 9 3-9M96 63l-3 4M96 63l3 4" stroke="#223" fill="none"/><circle cx="91" cy="70" r="2.5" fill="none" stroke="#2244c0" stroke-width="1.5"/><circle cx="100" cy="70" r="2.5" fill="none" stroke="#2244c0" stroke-width="1.5"/>
<path d="M113 56h8v11h-8zM117 60h9v12h-9z" fill="#fff" stroke="#000"/><path d="M119 64h5M119 67h5" stroke="#03a"/>
<rect x="136" y="58" width="11" height="14" fill="#c8a848" stroke="#333"/><rect x="139" y="56" width="5" height="3" fill="#333"/><path d="M143 63h7v9h-7z" fill="#fff" stroke="#000"/><path d="M145 66h3M145 69h3" stroke="#03a"/>
<path d="M161 62l3-7h7l-1 7z" fill="#fff" stroke="#333"/><rect x="158" y="62" width="16" height="7" fill="#bbb" stroke="#333"/><path d="M161 69h10v3h-10z" fill="#fff" stroke="#333"/>
<path d="M205 54v15l3-3 3 6 2-1-3-6h4z" fill="#000"/>
<circle cx="233" cy="63" r="6" fill="none" stroke="#333"/><path d="M229 59l8 8M237 59l-8 8" stroke="#333"/>
<text x="256" y="68" font-size="13" fill="#222">%</text>
<path d="M274 72q-5-6-6-9 1-2 3 0l2 3-2-9q1-2 3 0l2 6-1-8q2-1 3 0l1 8 1-7q2-1 3 1l-1 8 2-5q2 0 2 2l-2 8-2 3z" fill="#fff" stroke="#222"/>
<circle cx="300" cy="61" r="5.5" fill="#cde" stroke="#222" stroke-width="1.3"/><path d="M297 61h6M300 58v6" stroke="#03c" stroke-width="1.8"/><path d="M304 65l6 7" stroke="#222" stroke-width="2.5"/>
<path d="M319 60h3l4-4v14l-4-4h-3z" fill="#d8b020" stroke="#333"/><path d="M328 58v10M331 56v14" stroke="#b040c0" stroke-width="1.4"/>
<ellipse cx="352" cy="70" rx="4" ry="3" transform="rotate(-20 352 70)"/><path d="M355.5 70V54" stroke="#000" stroke-width="1.5"/><path d="M355.5 54C356 60 363 62 360 69" stroke="#000" fill="none" stroke-width="2"/>
<text x="377" y="68" font-size="11" fill="#222">(♩♩)</text>
<path d="M392 63l2-2 2 2 2-2 2 2 2-2 2 2 2-2 2 2" stroke="#333" fill="none"/>
<path d="M418 59l10 4-10 4" stroke="#333" fill="none"/>
<use href="#q" x="447" y="64"/>
<text x="469" y="67" font-size="10" fill="#222">0</text>
<text x="492" y="67" font-size="9" font-weight="bold" font-family="Liberation Serif,serif" fill="#222">P</text>
<path d="M508 70q1-11 14-12" stroke="#222" fill="none" stroke-width="1.3"/>
<text x="544" y="67" font-size="8.5" font-weight="bold" font-family="Liberation Serif,serif" font-style="italic" fill="#222">pppp</text>
<path d="M559 56h16v14h-16zM559 60h5M559 64h5M559 68h5M570 60h5M570 64h5M570 68h5M564 56v14M570 56v14" stroke="#222" fill="none"/>
<text x="590" y="66" font-size="9.5" font-family="Liberation Mono,monospace" fill="#222">Expr</text>
<rect x="606" y="55" width="14" height="16" fill="none" stroke="#222" stroke-width="1.2"/>
<g transform="translate(642 66) scale(.38)"><use href="#tc"/></g>
<g transform="translate(665 66) scale(.38)"><use href="#tc"/></g><path d="M657 58h16M657 62h16M657 66h16M657 70h16" stroke="#777" stroke-dasharray="1 1"/>
<path d="M688.5 54V72" stroke="#222"/>
<text x="705" y="64" font-size="10" font-family="Liberation Mono,monospace" fill="#222">Q</text><use href="#e" x="714" y="65"/>
<path d="M749 57h2v12h-2zM760 57v12l-8-6z" fill="#1a7a20"/><path d="M771 57h2v12h-2zM775 57h2v12h-2zM778 57l8 6-8 6z" fill="#1a7a20"/>
<rect x="796" y="58" width="9" height="9" fill="#000"/><path d="M819 57l10 6-10 6z" fill="#1a7a20"/>
<circle cx="847" cy="63" r="4.6" fill="#8a1218" stroke="#444"/><circle cx="846" cy="61" r="1.2" fill="#d88"/>
</g>
<path d="M6 7h12M6 11h12M6 15h12M6 19h12" stroke="#b8c8e0" stroke-width="1"/><path d="M8 2q3 2 2 7t-2 11q-1 3-4 1M8 10q-6 3-4 7 3 3 7 0" stroke="#1430d8" stroke-width="2" fill="none"/>
</svg>

<!-- status bar -->
<div class="st" style="left:0;top:975px;width:1280px;height:19px;border-top:1px solid #aaa;z-index:3"></div>
<div style="left:0;top:0;z-index:4">
<div class="lb" style="left:3px">视图</div><div class="bx" style="left:31px;width:42px">100%<span style="font-size:8px">▾</span></div>
<div class="lb" style="left:84px">音轨</div><div class="bx" style="left:111px;width:118px;text-align:left;padding-left:42px">Piano<span style="position:absolute;right:3px;font-size:9px;color:#0c0">▼</span></div>
<div class="lb" style="left:240px">声部</div><div class="bx" style="left:267px;width:28px;background:#041">All<span style="font-size:8px">▾</span></div>
<div class="lb" style="left:296px">小节</div><div class="bx" style="left:323px;width:28px">20</div>
<div class="lb" style="left:358px">页码</div><div class="bx" style="left:385px;width:28px">2</div>
<div style="left:419px;top:976px;width:20px;height:18px;background:#ddd;border:1px solid #bbb"></div>
<div style="left:442px;top:976px;width:20px;height:18px;background:#ddd;border:1px solid #bbb"></div>
<div style="left:499px;top:977px;width:74px;height:16px;background:#d8d8d8;border:1px solid #888;border-right-color:#eee;border-bottom-color:#eee"></div>
<div style="left:578px;top:976px;width:1px;height:17px;background:#888"></div>
<div class="lb" style="left:581px">疑难解答: &nbsp;http://www.popiano.org&nbsp;&nbsp;流行钢琴网</div>
</div>

<!-- taskbar -->
<div style="left:0;top:994px;width:1280px;height:30px;background:linear-gradient(#3b8af0 0,#2a6ee4 10%,#235ede 50%,#1f54d0 90%,#1a46b0 100%);z-index:3"></div>
<div style="left:0;top:994px;width:96px;height:30px;border-radius:0 10px 10px 0;background:linear-gradient(#4a9a4e 0,#3f8f3e 15%,#358435 80%,#2a6a2a 100%);z-index:4"></div>
<div style="left:35px;top:996px;color:#e8f0e8;font:italic 20px/26px 'Noto Sans CJK SC',sans-serif;letter-spacing:1px;z-index:5">开始</div>
<div class="tk" style="left:480px;width:160px;background:#1a4ab0;box-shadow:inset 1px 1px 2px #0c2a70;padding-left:30px;font:11px/24px 'Liberation Mono','Noto Sans CJK SC',monospace;z-index:4">Overture - 四季的歌</div>
<div class="tk" style="left:641px;width:158px;background:#3f7cef;box-shadow:inset 0 1px 0 #6aa0ff;padding-left:30px;z-index:4">百度知道——提问...</div>
<div style="left:1132px;top:994px;width:148px;height:30px;background:linear-gradient(#18a6f0,#0f8ae0 15%,#0f82d8 85%,#0b6cc0);border-left:1px solid #0a3a90;z-index:4"></div>
<div style="left:1237px;top:1002px;color:#e8f4ff;font-size:12px;line-height:14px;letter-spacing:.5px;z-index:5">23:52</div>
<div style="left:466px;top:997px;color:#bcd;font-size:11px;line-height:12px;z-index:5">»</div>
<svg width="1280" height="1024" style="z-index:5">
<g font-family="Liberation Sans,sans-serif">
<path d="M11 1002l7 2-1 7-7-2z" fill="#e8602c"/><path d="M19 1004l7 1-1 7-7-1z" fill="#58b030"/><path d="M10 1010l6 2-1 6-7-2z" fill="#2c80e0"/><path d="M17 1012l7 1-1 6-7-1z" fill="#f4c020"/>
<g id="ie"><ellipse cx="117" cy="1009" rx="6" ry="6.5" fill="none" stroke="#3ab0f0" stroke-width="2.5"/><path d="M110 1016q4-13 15-13" fill="none" stroke="#e8c040" stroke-width="2"/></g>
<rect x="134" y="1002" width="12" height="15" fill="#d82020" stroke="#eee"/><path d="M137 1006h6l-3 3zM137 1010h6l-3 3z" fill="#f4d040"/>
<circle cx="162" cy="1009" r="7" fill="#ddd"/><circle cx="162" cy="1009" r="4" fill="#2a4aa0"/><path d="M161 1006l4 3-4 3z" fill="#fff"/>
<circle cx="186" cy="1009" r="7.5" fill="#e8c020"/><path d="M183 1009h6M186 1006v6" stroke="#254" stroke-width="2.5"/>
<circle cx="209" cy="1009" r="7" fill="#f09030"/><circle cx="209" cy="1009" r="3.5" fill="#f8c060"/>
<path d="M231 1002q5 0 5 6l3 8h-16l3-8q0-6 5-6z" fill="#e89030"/><circle cx="231" cy="1006" r="3" fill="#204060"/>
<rect x="248" y="1002" width="14" height="15" fill="#d04040"/><rect x="250" y="1004" width="10" height="11" fill="#50b8d0"/><rect x="255" y="1009" width="5" height="6" fill="#e8c030"/>
<circle cx="278" cy="1006" r="4" fill="#ddd" stroke="#444"/><path d="M272 1017h12v-4h-12z" fill="#ddd" stroke="#444"/>
<circle cx="300" cy="1009" r="7" fill="#d8e8d8" stroke="#246"/><path d="M297 1006v5a3 3 0 0 0 6 0v-5" stroke="#184" stroke-width="2" fill="none"/>
<circle cx="323" cy="1004" r="3" fill="#eee"/><path d="M319 1009h8v6h-8z" fill="#38a030"/><path d="M320 1015v3M326 1015v3" stroke="#eee"/>
<circle cx="347" cy="1009" r="7" fill="#5a88d8" stroke="#cde"/><path d="M344 1006h5l2 3-4 4v-3h-3z" fill="#fff"/>
<use href="#ie" x="252"/>
<circle cx="393" cy="1009" r="7" fill="#e8c820"/><path d="M393 1002a7 7 0 0 1 6 3.5l-6 3.5z" fill="#d03020"/><path d="M387 1005.5a7 7 0 0 0 6 10.5l0-7z" fill="#30a040"/><circle cx="393" cy="1009" r="3" fill="#4080e0" stroke="#fff"/>
<rect x="411" y="1003" width="10" height="13" fill="#fff" stroke="#333"/><path d="M413 1006h6M413 1009h6M413 1012h6" stroke="#e0a000" stroke-width="1.4"/>
<rect x="432" y="1003" width="14" height="13" fill="#fff" stroke="#222"/><rect x="433" y="1004" width="12" height="3" fill="#1a3a90"/>
<path d="M498 1003q3 1 2 5t-1 9q-1 3-3 1M499 1009q-5 2-3 5" stroke="#13c" stroke-width="2" fill="none"/><path d="M492 1008h11M492 1011h11M492 1014h11" stroke="#9ac"/>
<use href="#ie" x="541"/>
<rect x="1094" y="1002" width="14" height="15" rx="1" fill="#e8501c" stroke="#eee"/><text x="1101" y="1014" font-size="12" font-weight="bold" fill="#fff" text-anchor="middle">S</text>
<path d="M1117.5 1003V1017" stroke="#eee"/>
<circle cx="1149" cy="1009" r="7.5" fill="#e8c020"/><path d="M1146 1009h6M1149 1006v6" stroke="#254" stroke-width="2.5"/>
<path d="M1168 1002h7v10h-7z" fill="#8ab"/><path d="M1164 1008h7v8h-7z" fill="#36a"/>
<circle cx="1183" cy="1008" r="4.5" fill="#aab" stroke="#444"/><path d="M1187 1011q3 2 2 6M1190 1009q4 3 3 9" stroke="#6af" fill="none"/>
<rect x="1196" y="1003" width="14" height="14" fill="#50b050" stroke="#eee"/><path d="M1196 1009h14M1201 1012h4" stroke="#eee"/>
<path d="M1222 1002l6 2v6q0 5-6 8q-6-3-6-8v-6z" fill="#e8f0e0" stroke="#286"/><path d="M1224 1005l-4 5h3l-2 5 4-6h-3z" fill="#28a040"/>
<!-- status icons -->
<path d="M421 985l7-6v3h8v6h-8v3z" fill="#18c018" stroke="#060"/><path d="M460 985l-7-6v3h-8v6h8v3z" fill="#bbb" stroke="#888"/>
<path d="M472 979h11v9h-11zM475 988v3M479 988v3" stroke="#333" fill="#eee"/><circle cx="474" cy="981" r="1.5" fill="#a02020"/><circle cx="478" cy="981" r="1.5" fill="#a02020"/><circle cx="482" cy="981" r="1.5" fill="#a02020"/>
</g>
</svg>
</body></html>
